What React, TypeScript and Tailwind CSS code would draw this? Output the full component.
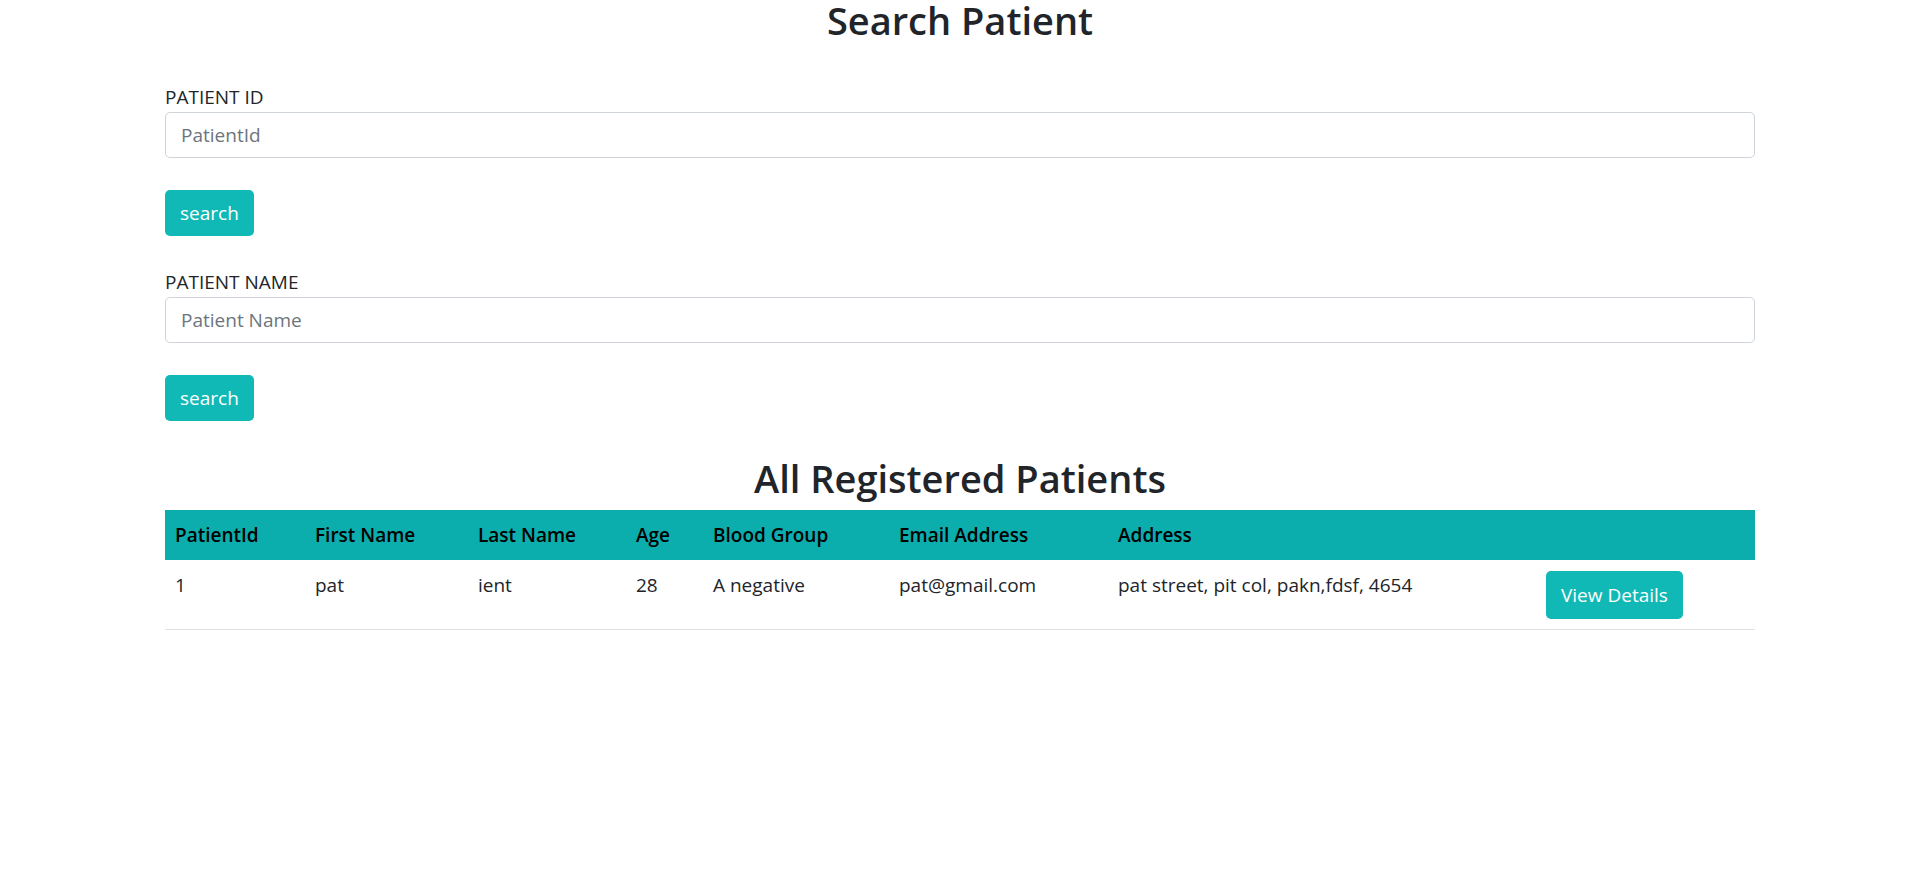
import React from 'react';

const patients = [
  {
    id: 1,
    firstName: 'pat',
    lastName: 'ient',
    age: 28,
    bloodGroup: 'A negative',
    email: 'pat@gmail.com',
    address: 'pat street, pit col, pakn,fdsf, 4654',
  },
];

function SearchField({ label, placeholder }: { label: string; placeholder: string }) {
  return (
    <div className="flex flex-col items-start">
      <label className="h-[29px] leading-[29px] text-[#212529]">{label}</label>
      <input
        type="text"
        placeholder={placeholder}
        className="w-full h-[46px] px-[15px] border border-[#ced4da] rounded-[5px] text-[19px] text-[#212529] placeholder:text-[#6c757d] outline-none"
      />
      <button className="mt-[32px] h-[46px] px-[15px] rounded-[5px] bg-[#10b9b6] text-white text-[19px] leading-none">
        search
      </button>
    </div>
  );
}

export default function App() {
  return (
    <div className="min-h-screen bg-white text-[#212529] text-[19px] font-['Open_Sans',sans-serif]">
      <h2 className="h-[40px] leading-[40px] text-center text-[38px] font-semibold">Search Patient</h2>

      <div className="w-[1590px] mx-auto">
        <div className="mt-[43px] flex flex-col gap-[32px]">
          <SearchField label="PATIENT ID" placeholder="PatientId" />
          <SearchField label="PATIENT NAME" placeholder="Patient Name" />
        </div>

        <h2 className="mt-[37px] mb-[12px] h-[40px] leading-[40px] text-center text-[38px] font-semibold">
          All Registered Patients
        </h2>

        <table className="w-full table-fixed border-collapse text-left">
          <thead>
            <tr className="bg-[#0baeac] text-black h-[50px]">
              <th className="w-[140px] px-[10px] font-semibold">PatientId</th>
              <th className="w-[163px] px-[10px] font-semibold">First Name</th>
              <th className="w-[158px] px-[10px] font-semibold">Last Name</th>
              <th className="w-[77px] px-[10px] font-semibold">Age</th>
              <th className="w-[186px] px-[10px] font-semibold">Blood Group</th>
              <th className="w-[219px] px-[10px] font-semibold">Email Address</th>
              <th className="w-[428px] px-[10px] font-semibold">Address</th>
              <th className="px-[10px]"></th>
            </tr>
          </thead>
          <tbody>
            {patients.map((p) => (
              <tr key={p.id} className="border-b border-[#dee2e6] align-top">
                <td className="px-[10px] pt-[11px] leading-[29px]">{p.id}</td>
                <td className="px-[10px] pt-[11px] leading-[29px]">{p.firstName}</td>
                <td className="px-[10px] pt-[11px] leading-[29px]">{p.lastName}</td>
                <td className="px-[10px] pt-[11px] leading-[29px]">{p.age}</td>
                <td className="px-[10px] pt-[11px] leading-[29px]">{p.bloodGroup}</td>
                <td className="px-[10px] pt-[11px] leading-[29px]">{p.email}</td>
                <td className="px-[10px] pt-[11px] leading-[29px]">{p.address}</td>
                <td className="px-[10px] pt-[11px] pb-[10px]">
                  <button className="h-[48px] px-[15px] rounded-[5px] bg-[#10b9b6] text-white text-[19px] leading-none">
                    View Details
                  </button>
                </td>
              </tr>
            ))}
          </tbody>
        </table>
      </div>
    </div>
  );
}
